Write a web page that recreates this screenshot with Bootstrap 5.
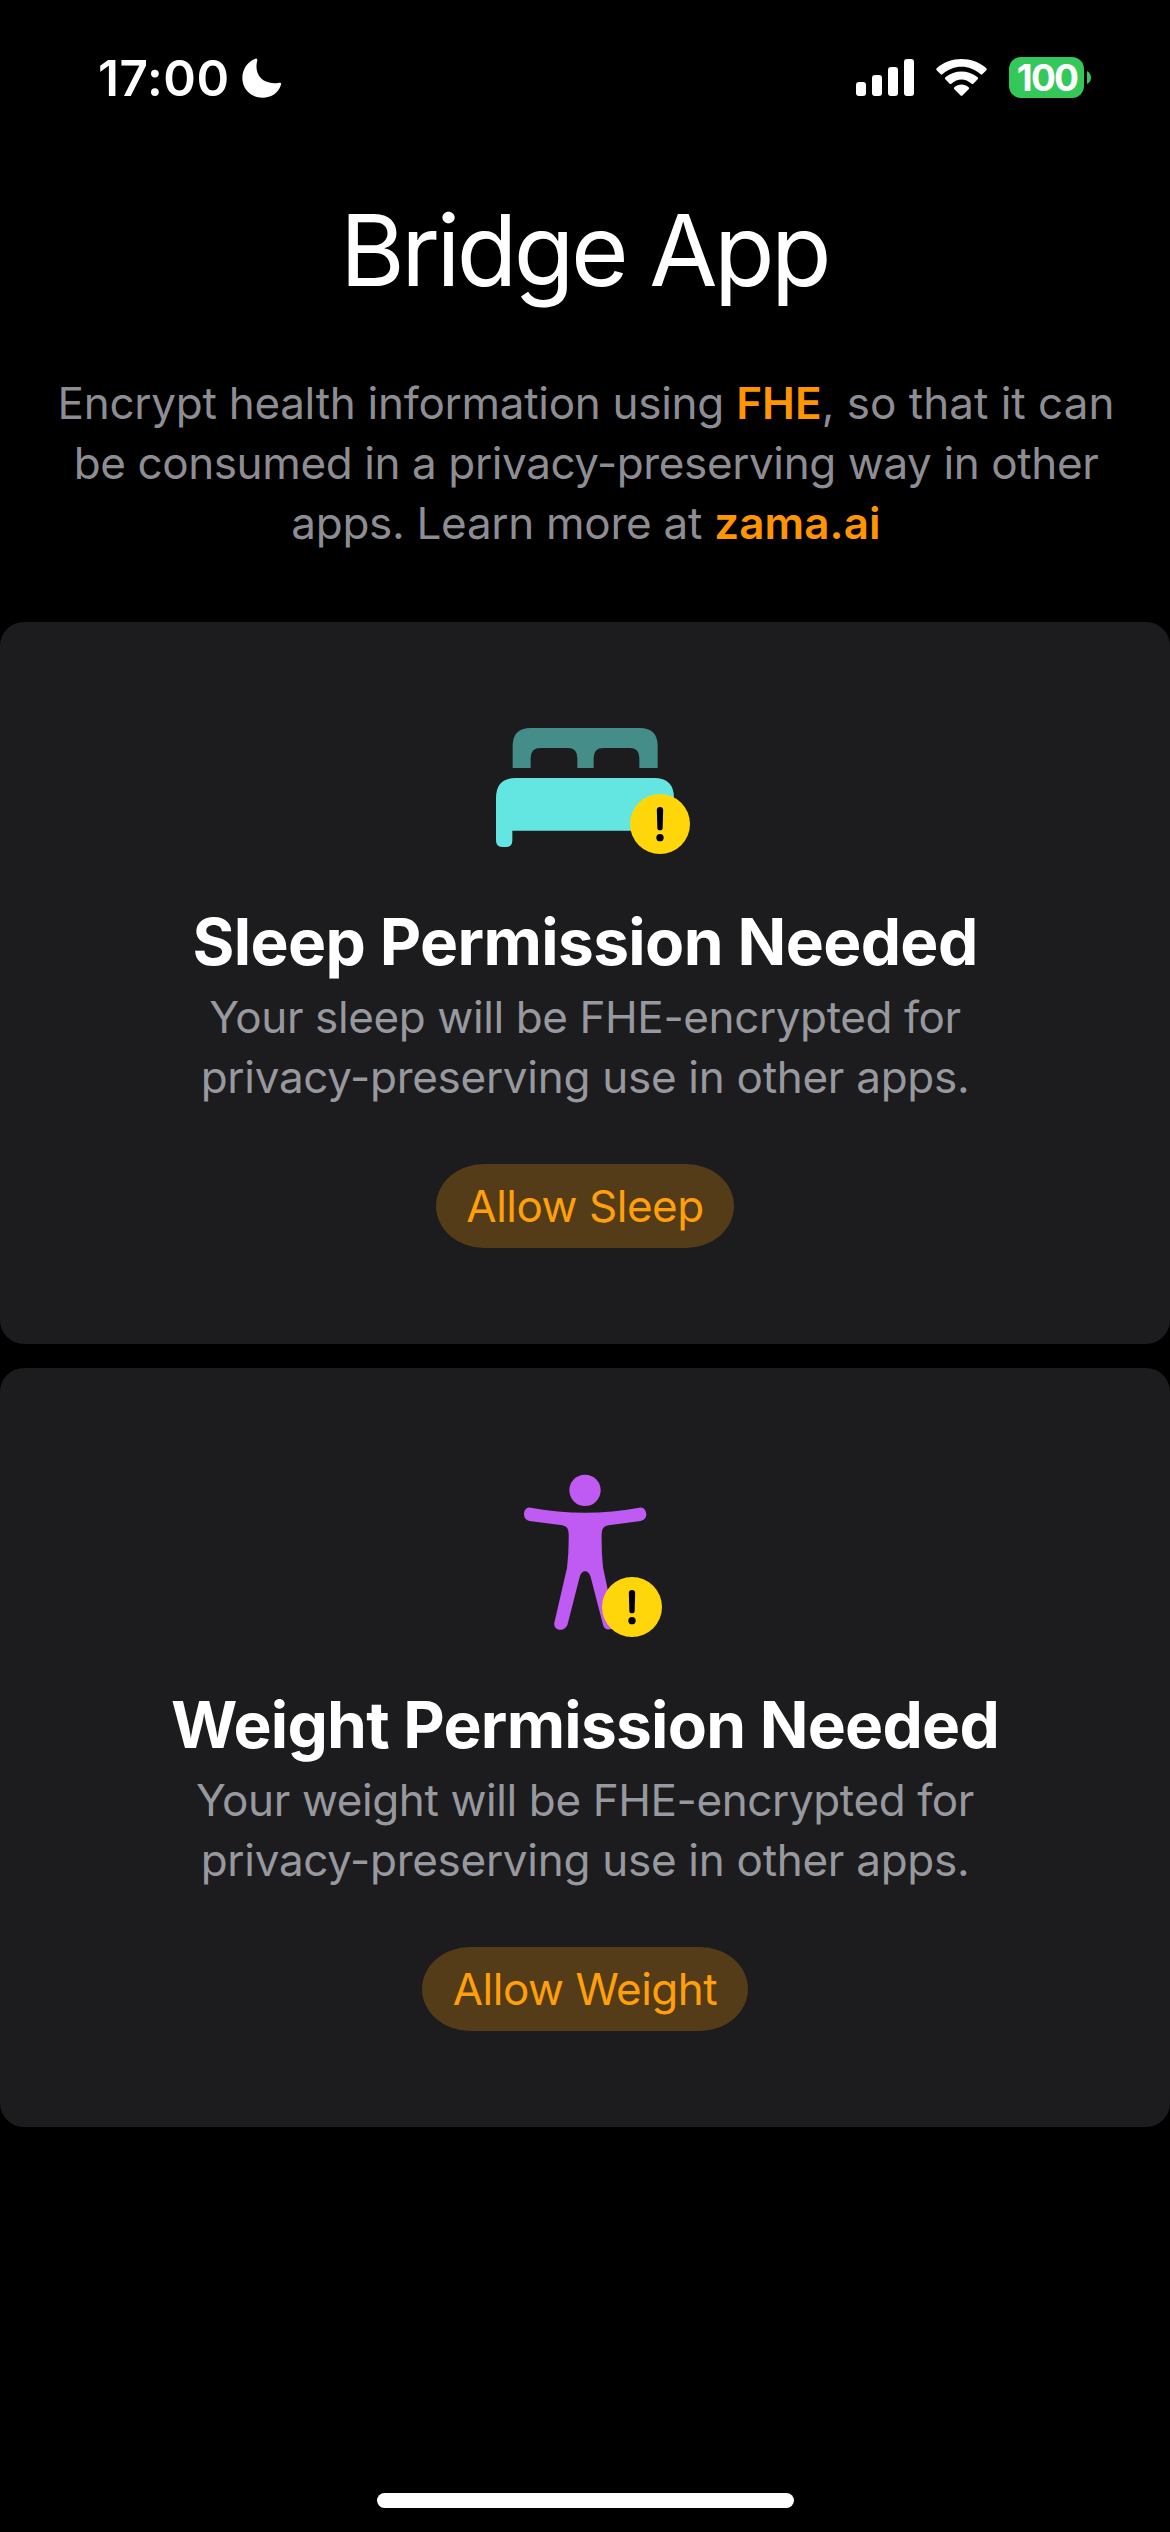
<!DOCTYPE html>
<html lang="en" data-bs-theme="dark">
<head>
<meta charset="utf-8">
<meta name="viewport" content="width=device-width, initial-scale=1">
<title>Bridge App</title>
<link href="https://cdn.jsdelivr.net/npm/bootstrap@5.3.0/dist/css/bootstrap.min.css" rel="stylesheet">
<style>
body{background:#000;color:#fff;font-family:Inter,"Liberation Sans",sans-serif;font-size:44px;line-height:60px}
svg{display:block;overflow:visible}
.screen{width:1170px;height:2532px;overflow:hidden}
.status-bar{height:190px;padding:48px 79px 0 98px}
.clock{font-size:49.5px;font-weight:600;letter-spacing:.6px}
.moon{margin:10px 0 0 12px}
.indicators{gap:22px;margin-top:9px}
.battery{width:75px;height:41px;border-radius:12px;background:#34c759;font-size:37px;font-weight:700;line-height:41px;letter-spacing:-1.8px;padding-left:1px}
.battery-tip{margin-left:3px}
.app-title{font-size:99px;line-height:120px;letter-spacing:-3.6px;padding-right:2px}
.intro{margin-top:63px;color:#8d8d93;letter-spacing:-.28px;padding-left:2px}
.intro strong{color:#ff9500;font-weight:600;letter-spacing:.1px}
.tight{letter-spacing:-.39px}
.even{letter-spacing:0}
.panel-list{margin-top:69px;gap:24px}
.panel{background:#1c1c1e;border-radius:24px;padding:106px 0 96px}
.panel h2{font-size:64px;line-height:78px;font-weight:700;letter-spacing:-.62px;margin:49px 0 6px}
.panel .wide-name{letter-spacing:-.75px}
.panel p{color:#98989f;letter-spacing:-.28px}
.btn-allow{margin-top:57px;padding:12px 30.8px;border:0;border-radius:48px/42px;font-size:44px;line-height:60px;letter-spacing:-.5px;--bs-btn-color:#ff9f0a;--bs-btn-bg:#543c18;--bs-btn-hover-color:#ff9f0a;--bs-btn-hover-bg:#654719}
.home-indicator{width:417px;height:15px;margin-bottom:24px}
</style>
</head>
<body>
<div class="screen d-flex flex-column">
  <header class="status-bar d-flex justify-content-between align-items-start">
    <div class="d-flex align-items-start">
      <span class="clock">17:00</span>
      <svg class="moon" width="40" height="40" viewBox="488 55 120 120"><path fill="#fff" d="M528 57Q534 55 534 62C522 106 552 138 600 129Q607 128 605 135C598 158 577 174 549 174C515 174 489 148 489 115C489 88 505 65 528 57Z"/></svg>
    </div>
    <div class="indicators d-flex align-items-center">
      <svg width="58" height="37" viewBox="0 0 58 37" fill="#fff"><rect y="23" width="10" height="14" rx="3"/><rect x="16" y="16" width="10" height="21" rx="3"/><rect x="32" y="8" width="10" height="29" rx="3"/><rect x="48" width="10" height="37" rx="3"/></svg>
      <svg width="51" height="37" viewBox="288 57 153 111" fill="#fff"><path d="M290 91Q287 88 290 85C332 48 397 48 439 85Q442 88 439 91L427 103Q425 105 422 103C388 73 341 73 307 103Q304 105 302 103ZM316 118Q313 115 316 112C345 89 384 89 413 112Q416 115 413 118L400 131Q398 133 395 131C376 114 353 114 334 131Q331 133 329 131ZM343 148Q340 145 343 142C356 131 373 131 386 142Q389 145 386 148L368 166Q364.500 169 361 166Z"/></svg>
      <div class="d-flex align-items-center">
        <div class="battery text-center">100</div>
        <svg class="battery-tip" width="4" height="13" viewBox="0 0 4 13"><path d="M0 0Q4 2 4 6.500T0 13Z" fill="#34c759"/></svg>
      </div>
    </div>
  </header>

  <main class="text-center text-nowrap">
    <h1 class="app-title fw-normal mb-0">Bridge App</h1>
    <p class="intro mb-0">Encrypt health information using <strong>FHE</strong><span class="even">, so that it can</span><br><span class="tight">be consumed in a privacy-preserving way in other</span><br>apps. Learn more at <strong>zama.ai</strong></p>

    <div class="panel-list d-flex flex-column">
      <section class="panel d-flex flex-column align-items-center">
        <svg width="178" height="126" viewBox="48 54 534 378">
          <path fill="#458d89" d="M98 174V108Q98 54 152 54H479Q533 54 533 108V174H478V143Q478 114 449 114H370Q341 114 341 143V174H292V143Q292 114 263 114H181Q152 114 152 143V174Z"/>
          <path fill="#63e6e2" d="M48 264Q48 204 108 204H522Q582 204 582 264V362H97V391Q97 411 79 411H66Q48 411 48 391Z"/>
          <circle cx="540" cy="342" r="90" fill="#ffd60a"/><path d="M530.500 300Q530.500 291 540 291T549.500 300L548 353Q548 361 540 361T532 353Z"/><circle cx="540" cy="383" r="11"/>
        </svg>
        <h2>Sleep Permission Needed</h2>
        <p class="mb-0"><span class="tight">Your sleep will be FHE-encrypted for</span><br>privacy-preserving use in other apps.</p>
        <button type="button" class="btn btn-allow">Allow Sleep</button>
      </section>

      <section class="panel d-flex flex-column align-items-center">
        <svg width="122" height="163" viewBox="72 57 366 489">
          <g fill="#bf5af2"><circle cx="255" cy="106" r="47"/><path d="M92 158Q255 188 418 158C432 156 439 168 439 178C439 189 432 196 422 198L326 211Q305 213 305 236Q304 290 309 337L344 503C348 524 315 533 309 509L272 366C266 343 244 343 239 366L203 507C196 533 159 528 163 503L201 339Q207 290 206 236Q206 214 187 211L88 198C78 196 72 189 72 178C72 166 79 156 92 158Z"/></g>
          <circle cx="396" cy="456" r="90" fill="#ffd60a"/><path d="M386.500 414Q386.500 405 396 405T405.500 414L404 467Q404 475 396 475T388 467Z"/><circle cx="396" cy="497" r="11"/>
        </svg>
        <h2 class="wide-name">Weight Permission Needed</h2>
        <p class="mb-0"><span class="tight">Your weight will be FHE-encrypted for</span><br>privacy-preserving use in other apps.</p>
        <button type="button" class="btn btn-allow">Allow Weight</button>
      </section>
    </div>
  </main>

  <div class="home-indicator bg-white rounded-pill mt-auto mx-auto"></div>
</div>
<script src="https://cdn.jsdelivr.net/npm/bootstrap@5.3.0/dist/js/bootstrap.bundle.min.js"></script>
</body>
</html>
